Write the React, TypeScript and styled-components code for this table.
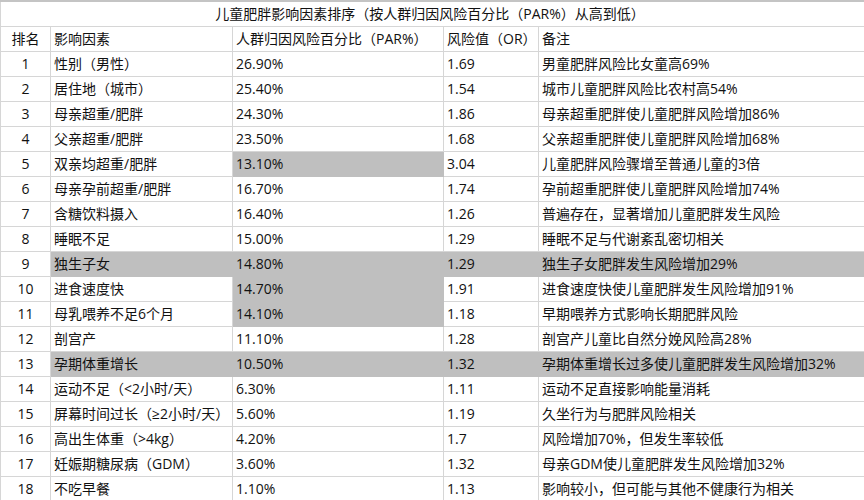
import styled, { createGlobalStyle } from 'styled-components';

const GlobalStyle = createGlobalStyle`
  html, body {
    margin: 0;
    padding: 0;
    background: #ffffff;
  }
  body {
    font-family: 'Open Sans', 'Noto Sans CJK SC', sans-serif;
    color: #111111;
  }
`;

const LINE = '#d6d6d6';
const SHADE = '#bfbfbf';

const Sheet = styled.div`
  width: 864px;
  height: 500px;
  overflow: hidden;
  border-top: 2px solid #c4c4c4;
  box-sizing: border-box;
`;

const Grid = styled.div`
  display: grid;
  grid-template-columns: 50px 182px 211px 95px 326px;
  grid-auto-rows: 25px;
  border-left: 1px solid ${LINE};
`;

const Title = styled.div`
  grid-column: 1 / -1;
  display: flex;
  align-items: center;
  justify-content: center;
  font-size: 14px;
  border-bottom: 1px solid ${LINE};
  padding: 0 6px 3px 0;
`;

const Cell = styled.div<{ $shade?: boolean; $center?: boolean }>`
  display: flex;
  align-items: center;
  justify-content: ${(p) => (p.$center ? 'center' : 'flex-start')};
  padding: 0 3px 2px 3px;
  box-sizing: border-box;
  font-size: 14px;
  white-space: nowrap;
  overflow: hidden;
  background: ${(p) => (p.$shade ? SHADE : '#ffffff')};
  border-right: 1px solid ${(p) => (p.$shade ? SHADE : LINE)};
  border-bottom: 1px solid ${(p) => (p.$shade ? SHADE : LINE)};
`;

interface Factor {
  name: string;
  par: string;
  or: string;
  note: string;
  rowShade?: boolean;
  parShade?: boolean;
}

const factors: Factor[] = [
  { name: '性别（男性）', par: '26.90%', or: '1.69', note: '男童肥胖风险比女童高69%' },
  { name: '居住地（城市）', par: '25.40%', or: '1.54', note: '城市儿童肥胖风险比农村高54%' },
  { name: '母亲超重/肥胖', par: '24.30%', or: '1.86', note: '母亲超重肥胖使儿童肥胖风险增加86%' },
  { name: '父亲超重/肥胖', par: '23.50%', or: '1.68', note: '父亲超重肥胖使儿童肥胖风险增加68%' },
  { name: '双亲均超重/肥胖', par: '13.10%', or: '3.04', note: '儿童肥胖风险骤增至普通儿童的3倍', parShade: true },
  { name: '母亲孕前超重/肥胖', par: '16.70%', or: '1.74', note: '孕前超重肥胖使儿童肥胖风险增加74%' },
  { name: '含糖饮料摄入', par: '16.40%', or: '1.26', note: '普遍存在，显著增加儿童肥胖发生风险' },
  { name: '睡眠不足', par: '15.00%', or: '1.29', note: '睡眠不足与代谢紊乱密切相关' },
  { name: '独生子女', par: '14.80%', or: '1.29', note: '独生子女肥胖发生风险增加29%', rowShade: true },
  { name: '进食速度快', par: '14.70%', or: '1.91', note: '进食速度快使儿童肥胖发生风险增加91%', parShade: true },
  { name: '母乳喂养不足6个月', par: '14.10%', or: '1.18', note: '早期喂养方式影响长期肥胖风险', parShade: true },
  { name: '剖宫产', par: '11.10%', or: '1.28', note: '剖宫产儿童比自然分娩风险高28%' },
  { name: '孕期体重增长', par: '10.50%', or: '1.32', note: '孕期体重增长过多使儿童肥胖发生风险增加32%', rowShade: true },
  { name: '运动不足（<2小时/天）', par: '6.30%', or: '1.11', note: '运动不足直接影响能量消耗' },
  { name: '屏幕时间过长（≥2小时/天）', par: '5.60%', or: '1.19', note: '久坐行为与肥胖风险相关' },
  { name: '高出生体重（>4kg）', par: '4.20%', or: '1.7', note: '风险增加70%，但发生率较低' },
  { name: '妊娠期糖尿病（GDM）', par: '3.60%', or: '1.32', note: '母亲GDM使儿童肥胖发生风险增加32%' },
  { name: '不吃早餐', par: '1.10%', or: '1.13', note: '影响较小，但可能与其他不健康行为相关' },
];

const Row = ({ rank, factor }: { rank: number; factor: Factor }) => {
  const row = !!factor.rowShade;
  return (
    <>
      <Cell $center>{rank}</Cell>
      <Cell $shade={row}>{factor.name}</Cell>
      <Cell $shade={row || !!factor.parShade}>{factor.par}</Cell>
      <Cell $shade={row}>{factor.or}</Cell>
      <Cell $shade={row}>{factor.note}</Cell>
    </>
  );
};

const App = () => {
  return (
    <>
      <GlobalStyle />
      <Sheet>
        <Grid>
          <Title>儿童肥胖影响因素排序（按人群归因风险百分比（PAR%）从高到低）</Title>
          <Cell $center>排名</Cell>
          <Cell>影响因素</Cell>
          <Cell>人群归因风险百分比（PAR%）</Cell>
          <Cell>风险值（OR）</Cell>
          <Cell>备注</Cell>
          {factors.map((f, i) => (
            <Row key={f.name} rank={i + 1} factor={f} />
          ))}
        </Grid>
      </Sheet>
    </>
  );
};

export default App;
